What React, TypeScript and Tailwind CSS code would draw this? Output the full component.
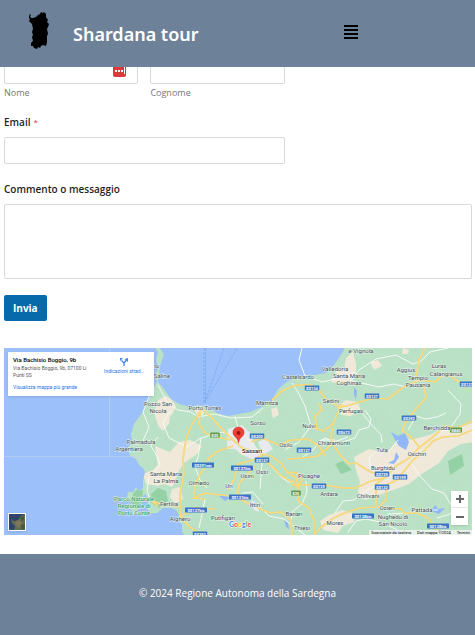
import { useState } from 'react';

const LAND =
  'M154 346 L158 352 L156 361 L159 367 L155 375 L157 382 L152 391 L148 402 L142 413 L134 424 L131 434 L132 441 L128 448 L130 456 L136 459 L139 465 L144 469 L145 473 L143 481 L143 488 L139 491 L136 487 L133 492 L128 492 L127 498 L131 503 L129 508 L133 512 L133 517 L136 511 L142 506 L142 498 L145 494 L149 500 L147 508 L150 513 L157 513 L163 508 L171 508 L176 510 L179 515 L178 521 L182 524 L182 531 L187 540 L480 540 L480 340 L347 340 L343 352 L334 365 L326 373 L314 375 L300 376 L288 381 L278 389 L272 401 L264 406 L250 412 L239 414 L228 416 L217 413 L207 407 L198 405 L190 407 L179 404 L171 399 L164 389 L158 382 L160 366 L164 354 L158 346 Z';

const TOWN_AREAS = [
  'M158 400 L166 396 L171 399 L176 406 L173 413 L170 417 L169 424 L163 431 L158 426 L154 412 Z',
  'M194 409 L201 406 L204 414 L198 417 Z',
  'M271 409 L277 407 L279 415 L273 418 Z',
  'M346 358 L353 352 L356 364 L356 377 L343 384 L331 382 L336 370 L344 369 Z',
  'M346 400 L358 402 L361 412 L350 416 L341 415 L337 407 Z',
  'M403 348 L409 350 L408 354 L402 354 Z',
  'M370 362 L378 360 L382 366 L374 370 Z',
  'M155 446 L170 452 L179 442 L190 440 L202 446 L196 455 L184 463 L177 474 L164 477 L158 467 Z',
  'M143 474 L153 470 L159 463 L167 466 L178 474 L172 487 L164 484 L158 486 L146 484 Z',
  'M172 489 L180 487 L183 499 L175 504 L170 497 Z',
  'M414 439 L430 435 L441 429 L458 428 L480 420 L480 441 L461 444 L448 451 L439 463 L423 473 L409 484 L396 489 L382 494 L365 500 L358 492 L360 482 L356 470 L354 457 L369 449 L387 453 L398 440 Z',
  'M329 515 L342 510 L353 513 L354 522 L343 526 L338 533 L323 530 L320 521 Z',
];

const CITY_AREAS = [
  'M228 429 L242 425 L252 435 L255 447 L262 453 L254 460 L242 455 L235 449 L227 449 Z',
  'M258 442 L266 438 L273 449 L263 455 Z',
  'M251 500 L258 504 L259 512 L254 510 Z',
];

const WATERS = [
  'M391 432 L398 436 L405 433 L409 442 L406 450 L399 446 L395 440 Z',
  'M388 463 L394 460 L396 452 L399 457 L394 464 Z',
  'M219 496 L226 495 L230 498 L225 501 Z',
  'M284 520 L288 523 L289 529 L286 527 Z',
  'M431 511 L435 505 L438 509 L445 508 L439 514 Z',
  'M354 387 L357 391 L356 400 L354 394 Z',
];

const PARKS = [
  'M158 488 L166 491 L168 501 L159 508 L150 502 L151 494 Z',
  'M138 489 L143 490 L142 503 L136 510 L130 501 L134 492 Z',
  'M352 470 L343 461 L335 464 L341 474 Z',
  'M448 461 L462 454 L464 466 L450 475 Z',
];

const WHITE_ROADS = [
  'M158 385 L167 402 L178 410 L191 412 L198 417 L214 414 L231 418 L252 417 L263 408',
  'M170 411 L163 423 L169 438 L187 447 L201 438 L222 432 L239 438',
  'M292 383 L298 392 L305 406 L311 426 L299 442 L285 450',
  'M302 348 L299 360 L305 376 L322 382 L340 378 L355 372',
  'M235 416 L238 428 L248 439 L258 450 L262 463 L260 489',
  'M348 380 L366 384 L379 387 L394 384 L406 387',
  'M349 384 L359 370 L376 359 L396 355 L413 364 L420 362 L430 352 L448 348',
  'M365 410 L371 419 L369 427 L359 430 L355 438 L343 442',
  'M361 412 L372 425 L381 435 L382 443',
  'M398 440 L389 451 L377 451 L369 458 L371 469',
  'M315 445 L325 438 L334 442 L348 437',
  'M448 390 L461 404 L460 414 L449 430 L437 432',
  'M408 430 L416 416 L426 419 L437 417 L446 413',
  'M263 504 L253 492 L243 493 L235 499',
  'M258 505 L269 516 L284 519 L296 528 L305 535',
  'M259 456 L270 465 L281 477 L288 482 L294 482',
  'M158 437 L151 446 L157 456 L160 465 L149 478 L147 490 L150 500',
  'M150 394 L143 412 L149 427 L142 443',
  'M201 438 L198 457 L195 466 L200 480 L207 488',
  'M303 457 L313 450 L321 440 L335 440',
  'M335 513 L343 501 L354 500 L367 490 L377 485',
  'M387 514 L406 513 L421 510 L438 510',
  'M412 464 L420 476 L432 489 L444 493 L451 505',
  'M306 481 L307 492 L302 504 L292 512 L291 525',
  'M205 499 L202 514 L199 528',
  'M348 532 L356 521 L366 519 L380 522 L400 531',
  'M437 518 L450 514 L459 504',
];

const YELLOW_ROADS = [
  'M201 407 L210 416 L219 426 L231 438 L242 448 L258 453 L271 456 L281 463 L287 472 L296 478 L299 488 L298 501 L309 508 L314 520 L314 535',
  'M201 408 L199 424 L205 433 L216 437 L231 440',
  'M201 410 L191 426 L186 439 L183 459 L184 474 L180 494 L180 517 L190 527 L201 535',
  'M233 446 L218 451 L209 458 L203 470 L195 483 L194 498 L205 499',
  'M194 498 L205 493 L221 495 L239 497 L245 502 L261 509 L270 513 L281 512 L291 520 L292 535',
  'M262 455 L253 460 L238 464 L234 479 L228 490',
  'M255 466 L240 482 L237 493 L246 503',
  'M180 517 L194 508 L215 509',
  'M181 507 L166 505 L158 503 L149 499 L158 506',
  'M251 442 L262 438 L279 445 L291 440 L308 439 L319 446 L325 456',
  'M319 403 L322 410 L315 416 L317 429 L323 431 L333 424 L339 410 L342 404',
  'M332 427 L331 445 L318 456 L304 458 L287 459',
  'M337 408 L350 405 L363 401 L374 398 L388 399 L397 392 L407 385 L420 380 L435 382 L443 375 L451 376 L466 387',
  'M272 400 L282 391 L296 385 L311 385 L320 391 L327 401 L341 407',
  'M426 346 L419 360 L417 371 L415 380',
  'M424 385 L426 398 L415 410 L405 423 L402 430 L412 438 L420 448',
  'M478 418 L466 424 L457 428 L445 426 L434 436 L420 447 L409 458 L396 466 L386 477 L376 484 L376 506',
  'M477 428 L458 436 L443 437 L433 441 L423 452 L413 460 L404 471 L397 480 L386 485 L386 500 L379 507',
  'M376 507 L360 508 L342 514 L332 519 L320 528 L314 535',
  'M377 507 L401 509 L404 513 L417 513 L428 518 L439 532',
  'M332 441 L339 454 L349 464 L356 463 L369 471 L378 475',
  'M291 485 L308 485 L325 485 L343 488 L356 488 L371 481 L384 478',
  'M287 472 L297 473 L302 480 L297 487 L292 480',
  'M292 482 L280 475 L273 467 L264 459',
];

type Mark = [x: number, y: number, text: string];

const PLACES: Mark[] = [
  [149, 368, 'Stintino'],
  [158, 378, 'Le Saline'],
  [158, 406, 'Pozzo San'],
  [158, 413, 'Nicola'],
  [205, 410, 'Porto Torres'],
  [267, 405, 'Marritza'],
  [298, 379, 'Castelsardo'],
  [258, 425, 'Sorso'],
  [309, 428, 'Nulvi'],
  [141, 444, 'Palmadula'],
  [129, 451, 'Argentiera'],
  [166, 476, 'Santa Maria'],
  [166, 483, 'La Palma'],
  [169, 506, 'Fertilia'],
  [180, 521, 'Alghero'],
  [199, 485, 'Olmedo'],
  [229, 488, 'Uri'],
  [247, 478, 'Usini'],
  [262, 474, 'Ossi'],
  [286, 447, 'Osilo'],
  [309, 478, 'Ploaghe'],
  [255, 507, 'Ittiri'],
  [223, 520, 'Putifigari'],
  [294, 516, 'Banari'],
  [302, 530, 'Thiesi'],
  [361, 353, 'e Vignola'],
  [335, 371, 'Valledoria'],
  [349, 378, 'Santa Maria'],
  [349, 385, 'Coghinas'],
  [406, 372, 'Aggius'],
  [439, 368, 'Luras'],
  [446, 376, 'Calangianus'],
  [418, 380, 'Tempio'],
  [418, 387, 'Pausania'],
  [331, 403, 'Sedini'],
  [351, 413, 'Perfugas'],
  [334, 445, 'Chiaramonti'],
  [437, 430, 'Berchidda'],
  [382, 452, 'Tula'],
  [417, 456, 'Oschiri'],
  [383, 470, 'Burghidu'],
  [329, 496, 'Ardara'],
  [368, 498, 'Chilivani'],
  [387, 510, 'Ozieri'],
  [422, 512, 'Pattada'],
  [393, 519, 'Nughedu di'],
  [393, 526, 'San Nicolò'],
  [335, 525, 'Mores'],
];

const SHIELDS: Mark[] = [
  [257, 436, 'SS200'],
  [262, 460, 'SS127'],
  [304, 450, 'SS127'],
  [242, 468, 'SS127bis'],
  [203, 465, 'SS291var'],
  [240, 497, 'SS131bis'],
  [196, 510, 'SS127bis'],
  [200, 534, 'SS292'],
  [312, 388, 'SS134'],
  [372, 396, 'SS127'],
  [467, 384, 'SS127'],
  [409, 418, 'SS392'],
  [344, 432, 'SS672'],
  [319, 486, 'SS729'],
  [382, 474, 'SS729'],
  [400, 477, 'SS199'],
  [382, 487, 'SS132'],
  [363, 516, 'SS128bis'],
  [438, 526, 'SS128bis'],
];

const EURO_ROUTES: Mark[] = [
  [215, 435, 'E25'],
  [296, 493, 'E25'],
  [456, 430, 'E840'],
];

function SardiniaLogo() {
  return (
    <svg className="h-[38px] w-5 shrink-0" viewBox="0 0 20 38" aria-label="Sardegna" role="img">
      <path
        fill="#000"
        d="M0 4 L1 2 L2 3 L1 4 L2 6 L4 6 L7 5 L9 3 L11 2 L12 0 L14 1 L15 0 L17 2 L17 5 L19 8 L18 10 L20 12 L19 15 L18 17 L19 22 L18 24 L18 30 L17 34 L14 33 L12 34 L11 36 L9 35 L8 37 L5 36 L4 34 L2 34 L2 31 L4 29 L3 25 L4 23 L3 20 L4 17 L3 12 L0 9 L1 7 L0 6 Z"
      />
    </svg>
  );
}

function MapDrawing() {
  return (
    <svg
      className="block h-[187px] w-full"
      viewBox="4 348 468 187"
      preserveAspectRatio="xMidYMid slice"
      role="img"
      aria-label="Mappa di Sassari"
    >
      <defs>
        <filter id="relief" x="0" y="0" width="100%" height="100%">
          <feTurbulence type="fractalNoise" baseFrequency="0.08" numOctaves="3" seed="4" />
          <feColorMatrix values="0 0 0 0 0.45  0 0 0 0 0.72  0 0 0 0 0.56  1.4 0 0 0 -0.6" />
        </filter>
        <clipPath id="land-clip">
          <path d={LAND} />
        </clipPath>
      </defs>
      <rect x="0" y="340" width="480" height="200" fill="#9cc0fa" />
      <path d={LAND} fill="#bbe2c6" />
      <g clipPath="url(#land-clip)">
        <rect x="120" y="340" width="360" height="200" filter="url(#relief)" opacity="0.35" />
        {PARKS.map((d) => <path key={d} d={d} fill="#94d2a5" />)}
        {TOWN_AREAS.map((d) => <path key={d} d={d} fill="#f0e9d9" />)}
        {CITY_AREAS.map((d) => <path key={d} d={d} fill="#e8eaed" />)}
      </g>
      {WATERS.map((d) => <path key={d} d={d} fill="#90b8f8" />)}
      <g stroke="#c3d4ee" strokeWidth="0.6">
        <path d="M109.500 348 V456 M4 456.500 H143" />
      </g>
      <g fill="none" stroke="#7ca9ee" strokeWidth="0.8" strokeDasharray="3 1">
        <path d="M204 348 V403 M205.500 348 V403 M224 348 L205 402 M237 348 L205 402" />
      </g>
      <g fill="none" stroke="#f6faf5" strokeWidth="1" strokeLinejoin="round">
        {WHITE_ROADS.map((d) => <path key={d} d={d} />)}
      </g>
      <g fill="none" strokeLinejoin="round">
        {YELLOW_ROADS.map((d) => <path key={d} d={d} stroke="#e9cf78" strokeWidth="1.700" />)}
        {YELLOW_ROADS.map((d) => <path key={d} d={d} stroke="#fbdd80" strokeWidth="1.200" />)}
      </g>
      <g fontFamily="Roboto, sans-serif" textAnchor="middle">
        {SHIELDS.map(([x, y, t]) => (
          <g key={`${x}-${y}`}>
            <rect x={x - t.length * 1.25 - 1} y={y - 2.5} width={t.length * 2.5 + 2} height="5" rx="0.5" fill="#3974c5" />
            <text x={x} y={y + 1.5} fontSize="4" fontWeight="700" fill="#fff">{t}</text>
          </g>
        ))}
        {EURO_ROUTES.map(([x, y, t]) => (
          <g key={`${x}-${y}`}>
            <rect x={x - t.length * 1.25 - 1} y={y - 2.5} width={t.length * 2.5 + 2} height="5" rx="0.5" fill="#60994a" />
            <text x={x} y={y + 1.5} fontSize="4" fontWeight="700" fill="#fff">{t}</text>
          </g>
        ))}
        <g fontSize="6" fill="#3c4a50" stroke="#f2f8f4" strokeWidth="0.8" paintOrder="stroke">
          {PLACES.map(([x, y, t]) => <text key={t + y} x={x} y={y}>{t}</text>)}
        </g>
        <text x="252" y="453" fontSize="6" fontWeight="500" fill="#202124" stroke="#fff" strokeWidth="1" paintOrder="stroke">Sassari</text>
        <g fontSize="6" fontWeight="500" fill="#36a160" stroke="#e5f4ec" strokeWidth="1" paintOrder="stroke">
          <text x="134" y="501">Parco Naturale</text>
          <text x="134" y="508">Regionale di</text>
          <text x="134" y="515">Porto Conte</text>
        </g>
      </g>
      <path d="M238.500 443 C238 437 233 437 233 432.500 A5.500 5.500 0 0 1 244 432.500 C244 437 239 437 238.500 443 Z" fill="#ea4335" stroke="#c5221f" strokeWidth="0.5" />
      <circle cx="238.500" cy="433" r="2" fill="#a50e0e" />
      <text x="229" y="527" fontFamily="Lato, sans-serif" fontSize="7" fontWeight="700" stroke="#fff" strokeWidth="1" paintOrder="stroke">
        <tspan fill="#4285f4">G</tspan><tspan fill="#ea4335">o</tspan><tspan fill="#fbbc04">o</tspan><tspan fill="#4285f4">g</tspan><tspan fill="#34a853">l</tspan><tspan fill="#ea4335">e</tspan>
      </text>
    </svg>
  );
}

function MapCard() {
  return (
    <div className="absolute top-1 left-1 flex h-11 w-[146px] justify-between bg-white pt-1 pr-2.5 pl-[5px] font-[Roboto,sans-serif] text-[5px] leading-[7px] shadow-sm">
      <div className="whitespace-nowrap">
        <p className="text-[6px] leading-[8px] font-medium text-black">Via Bachisio Boggio, 9b</p>
        <p className="mt-px text-[#5b5b5b]">Via Bachisio Boggio, 9b, 07100 Li</p>
        <p className="text-[#5b5b5b]">Punti SS</p>
        <a href="#mappa" className="mt-[5px] block text-[#1a73e8]">Visualizza mappa più grande</a>
      </div>
      <a href="#indicazioni" className="flex flex-col items-center gap-0.5 pt-[2px] whitespace-nowrap text-[#1a73e8]">
        <svg className="size-2" viewBox="0 0 8 8" aria-hidden="true">
          <path d="M4 8 V5 L1.500 2.500 M4 5 L6.500 2" fill="none" stroke="#4285f4" strokeWidth="1.300" />
          <path d="M0 0 H3 L0 3 Z M8 0 V4 L4.500 1 Z" fill="#4285f4" />
        </svg>
        <span>Indicazioni strad…</span>
      </a>
    </div>
  );
}

function MapControls({ onZoom }: { onZoom: (step: number) => void }) {
  return (
    <div className="absolute right-1 bottom-2.5 flex w-[17px] flex-col divide-y divide-[#e6e6e6] bg-white shadow-sm">
      <button type="button" aria-label="Zoom avanti" onClick={() => onZoom(1)} className="flex h-[17px] items-center justify-center">
        <svg className="size-2" viewBox="0 0 8 8"><path d="M0 4 H8 M4 0 V8" stroke="#666" strokeWidth="2" /></svg>
      </button>
      <button type="button" aria-label="Zoom indietro" onClick={() => onZoom(-1)} className="flex h-[17px] items-center justify-center">
        <svg className="size-2" viewBox="0 0 8 8"><path d="M0 4 H8" stroke="#666" strokeWidth="2" /></svg>
      </button>
    </div>
  );
}

function LayerThumb() {
  return (
    <button type="button" aria-label="Satellite" className="absolute bottom-1 left-1 size-[18px] border border-white shadow-sm">
      <svg className="block size-full" viewBox="0 0 16 16">
        <rect width="16" height="16" fill="#2f4468" />
        <path d="M2 5 L5 7 L9 6 L12 2 L16 0 V16 H5 L6 12 L3 9 Z" fill="#5f6c50" />
        <path d="M6 8 L10 6 L13 9 L10 14 L7 12 Z" fill="#7d765a" />
        <path d="M12 3 L15 2 L15 6 L12 7 Z M12 11 L16 10 V15 L13 16 Z" fill="#45593f" />
      </svg>
    </button>
  );
}

const FIELD = 'block w-full rounded-[2px] border border-[#d9d9d9] bg-white px-2 text-[10px] outline-none';
const LABEL = 'flex items-start gap-[3px] text-[10px] leading-[14px] font-semibold text-[#1f1f1f]';
const CAPTION = 'mt-[1px] block text-[9px] leading-4 text-[#777]';

export default function App() {
  const [open, setOpen] = useState(false);
  const [, setZoom] = useState(9);

  return (
    <div className="bg-white font-['Open_Sans','Noto_Sans',sans-serif]">
      <header className="sticky top-0 z-10 flex h-[67px] items-start bg-[#6d8198] pl-[29px]">
        <div className="flex flex-1 items-center gap-6 pt-3">
          <SardiniaLogo />
          <h1 className="pt-1.5 font-['Noto_Sans',sans-serif] text-lg leading-6 font-semibold whitespace-nowrap text-white">Shardana tour</h1>
        </div>
        <button type="button" aria-label="Menu" aria-expanded={open} onClick={() => setOpen(!open)} className="mt-[25px] mr-[117px]">
          <svg className="block h-3.5 w-3.5" viewBox="0 0 14 14">
            <path d="M0 1 H14 M0 5 H14 M0 9 H14 M0 13 H14" stroke="#000" strokeWidth="1.900" />
          </svg>
        </button>
      </header>

      <main className="-mt-2.5 pr-[3px] pl-1">
        <form onSubmit={(e) => e.preventDefault()}>
          <div className="grid w-3/5 grid-cols-2 gap-3">
            <div>
              <div className="relative">
                <input id="nome" type="text" className={`${FIELD} h-[27px]`} />
                <svg className="absolute right-3 bottom-[7px] h-[13px] w-[13px]" viewBox="0 0 13 13" aria-hidden="true">
                  <rect width="13" height="13" rx="2" fill="#d93a3a" />
                  <path d="M2 6 H4 V8 H2 Z M5 6 H7 V8 H5 Z M8 6 H10 V8 H8 Z M11 3 H12 V10 H11 Z" fill="#fff" />
                </svg>
              </div>
              <label htmlFor="nome" className={CAPTION}>Nome</label>
            </div>
            <div>
              <input id="cognome" type="text" className={`${FIELD} h-[27px]`} />
              <label htmlFor="cognome" className={CAPTION}>Cognome</label>
            </div>
          </div>

          <div className="mt-3.5">
            <label htmlFor="email" className={LABEL}>
              Email <span className="text-[8px] font-normal text-[#d63637]">*</span>
            </label>
            <div className="mt-2 w-3/5">
              <input id="email" type="email" className={`${FIELD} h-[27px]`} />
            </div>
          </div>

          <div className="mt-[18px]">
            <label htmlFor="messaggio" className={LABEL}>Commento o messaggio</label>
            <textarea id="messaggio" className={`${FIELD} mt-2 h-[75px] resize-none`} />
          </div>

          <button type="submit" className="mt-4 block h-[26px] rounded-[2px] bg-[#066aab] px-[9px] text-[10px] font-bold text-white">
            Invia
          </button>
        </form>

        <section className="relative mt-[27px] overflow-hidden" aria-label="Mappa">
          <MapDrawing />
          <MapCard />
          <LayerThumb />
          <MapControls onZoom={(step) => setZoom((z) => z + step)} />
          <div className="absolute right-0 bottom-0 flex gap-1.5 bg-[#e8f1ea] px-0.5 font-[Roboto,sans-serif] text-[4px] leading-[5px] text-black">
            <span>Scorciatoie da tastiera</span>
            <span>Dati mappa ©2024</span>
            <a href="#termini">Termini</a>
          </div>
        </section>
      </main>

      <footer className="mt-[19px] flex h-[81px] items-center justify-center bg-[#6d8198] pb-1">
        <p className="text-[10px] leading-4 text-white">© 2024 Regione Autonoma della Sardegna</p>
      </footer>
    </div>
  );
}
